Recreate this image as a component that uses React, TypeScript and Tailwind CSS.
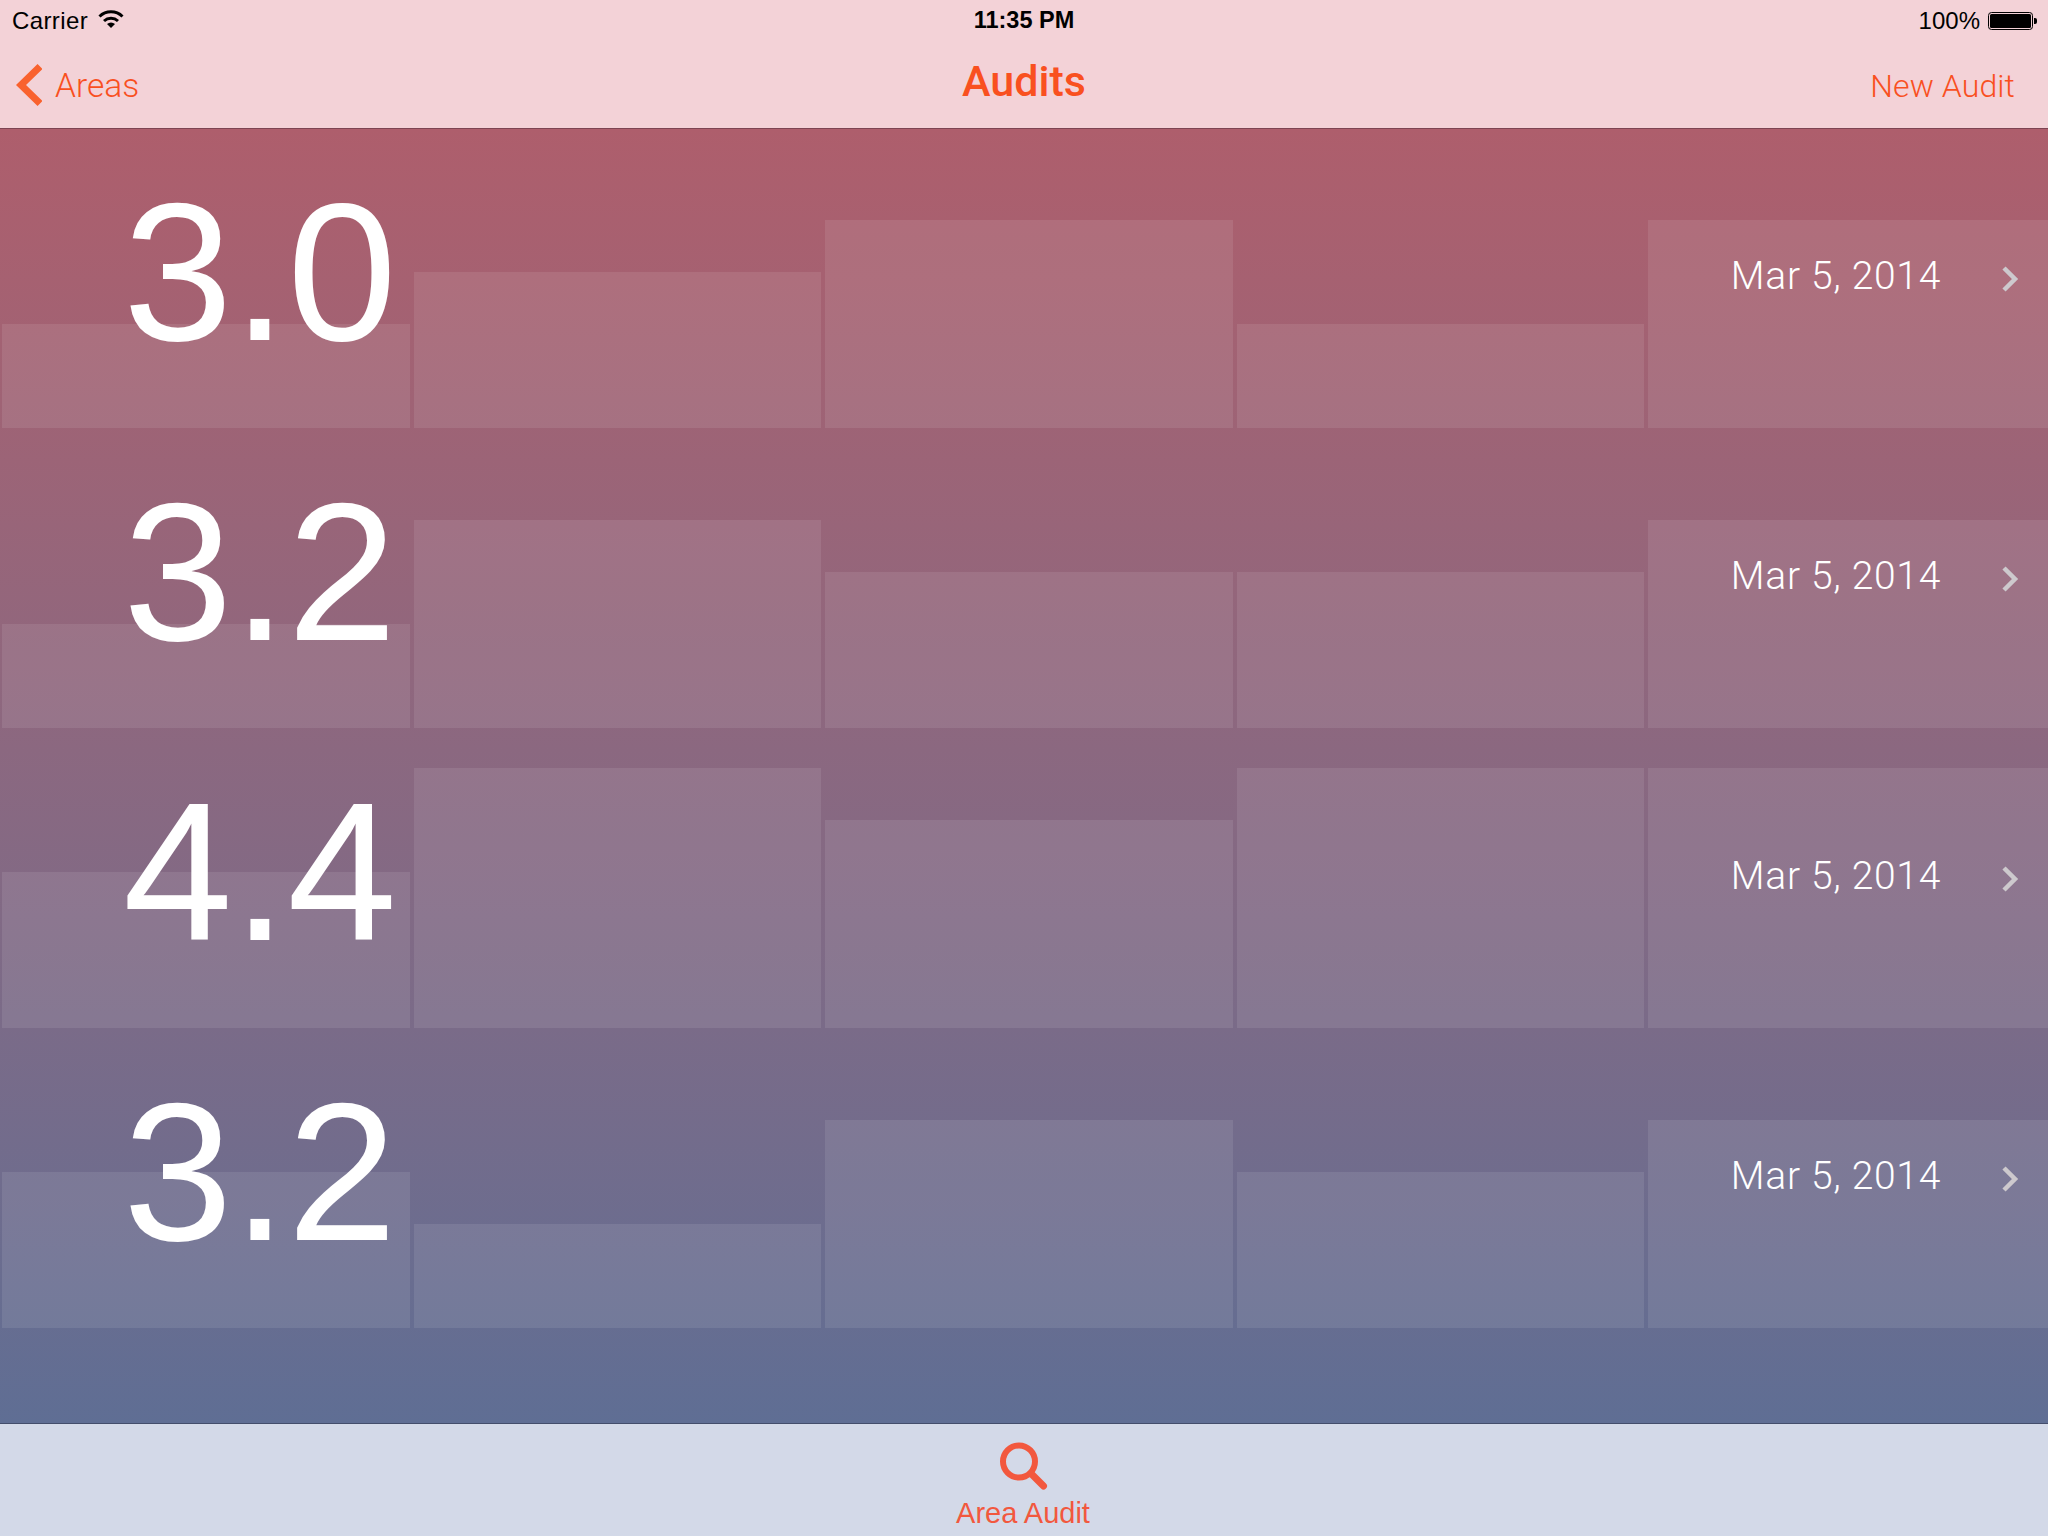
const rows = [
  { score: "3.0", bars: [2, 3, 4, 2, 4] },
  { score: "3.2", bars: [2, 4, 3, 3, 4] },
  { score: "4.4", bars: [3, 5, 4, 5, 5] },
  { score: "3.2", bars: [3, 2, 4, 3, 4] },
];

const barHeights = ["h-0", "h-[52px]", "h-[104px]", "h-[156px]", "h-[208px]", "h-[260px]"];

function Row({ score, bars }: { score: string; bars: number[] }) {
  return (
    <div className="relative h-[300px] w-full overflow-hidden">
      <div className="grid h-full grid-cols-[repeat(5,411.5px)] items-end pl-[2px]">
        {bars.map((b, i) => (
          <div key={i} className={`w-[407.5px] bg-white/[0.09] ${barHeights[b]}`} />
        ))}
      </div>
      <div className="absolute inset-0 flex items-start">
        <div className="ml-[123px] mt-[34px] text-[197px] leading-[220px] text-white font-['Liberation_Sans',sans-serif]">
          {score}
        </div>
        <div className="ml-auto mr-[107px] mt-[123px] text-[39px] leading-[50px] tracking-[0.7px] font-light text-white font-['Roboto',sans-serif]">
          Mar 5, 2014
        </div>
      </div>
      <svg className="absolute left-[2000px] top-[138px]" width="22" height="26" viewBox="0 0 22 26">
        <path d="M4 2 L15 13 L4 24" fill="none" stroke="#cdc9cd" strokeWidth="4.5" />
      </svg>
    </div>
  );
}

export default function App() {
  return (
    <div className="flex h-[1536px] w-[2048px] flex-col overflow-hidden font-['Liberation_Sans',sans-serif]">
      <header className="relative z-10 h-[128px] shrink-0 bg-[#f3d2d7] shadow-[0_1px_0_#7d4452]">
        <div className="relative flex h-[41px] items-center justify-between pl-3 pr-[10px] text-[24px] text-black">
          <div className="flex items-center gap-[10px]">
            <span className="tracking-[0.4px]">Carrier</span>
            <svg className="-mt-[3px]" width="26" height="20" viewBox="0 0 26 20" aria-hidden="true">
              <path d="M1.5 7.5 A16.5 16.5 0 0 1 24.5 7.5" fill="none" stroke="#000" strokeWidth="3" />
              <path d="M6 12 A10.5 10.5 0 0 1 20 12" fill="none" stroke="#000" strokeWidth="3" />
              <path d="M9 15 L13 19 L17 15 A6 6 0 0 0 9 15 Z" fill="#000" />
            </svg>
          </div>
          <span className="absolute left-0 right-0 text-center text-[23.5px] font-bold">11:35 PM</span>
          <div className="flex items-center gap-[8px]">
            <span>100%</span>
            <svg width="50" height="20" viewBox="0 0 50 20" aria-hidden="true">
              <rect x="0.5" y="1.5" width="44" height="17" rx="3" fill="none" stroke="#000" strokeWidth="1" />
              <rect x="2" y="3" width="41" height="14" rx="1.5" fill="#000" />
              <path d="M46 7 h1 a2 2 0 0 1 2 2 v2 a2 2 0 0 1 -2 2 h-1 Z" fill="#000" />
            </svg>
          </div>
        </div>
        <div className="relative flex h-[87px] items-center justify-between font-['Roboto',sans-serif] text-[#f9501f]">
          <div className="flex items-center">
            <svg className="ml-[16px]" width="26" height="42" viewBox="0 0 26 42" aria-hidden="true">
              <path d="M24 2.5 L5 21 L24 39.5" fill="none" stroke="#f9622e" strokeWidth="7" />
            </svg>
            <span className="ml-[13px] mt-[3px] text-[33.5px] font-light">Areas</span>
          </div>
          <span className="absolute left-0 right-0 top-[15px] text-center text-[43px] font-medium leading-[50px]">Audits</span>
          <span className="mr-[33px] mt-[3px] text-[32px] tracking-[0.1px] font-light">New Audit</span>
        </div>
      </header>

      <main className="flex-1 bg-gradient-to-b from-[#ae5e6c] to-[#5f6e94]">
        {rows.map((r, i) => (
          <Row key={i} score={r.score} bars={r.bars} />
        ))}
      </main>

      <footer className="flex h-[113px] shrink-0 flex-col items-center border-t border-[#434d6b] bg-[#d3d9e8] text-[#f2583e]">
        <svg className="mt-[17px] -ml-[2px]" width="50" height="50" viewBox="0 0 50 50" aria-hidden="true">
          <circle cx="21" cy="20.5" r="16" fill="none" stroke="#f2583e" strokeWidth="6" />
          <path d="M33 32.5 L45.5 45" fill="none" stroke="#f2583e" strokeWidth="7" strokeLinecap="round" />
        </svg>
        <span className="mt-[6px] -ml-[2px] text-[29px] leading-[32px]">Area Audit</span>
      </footer>
    </div>
  );
}
